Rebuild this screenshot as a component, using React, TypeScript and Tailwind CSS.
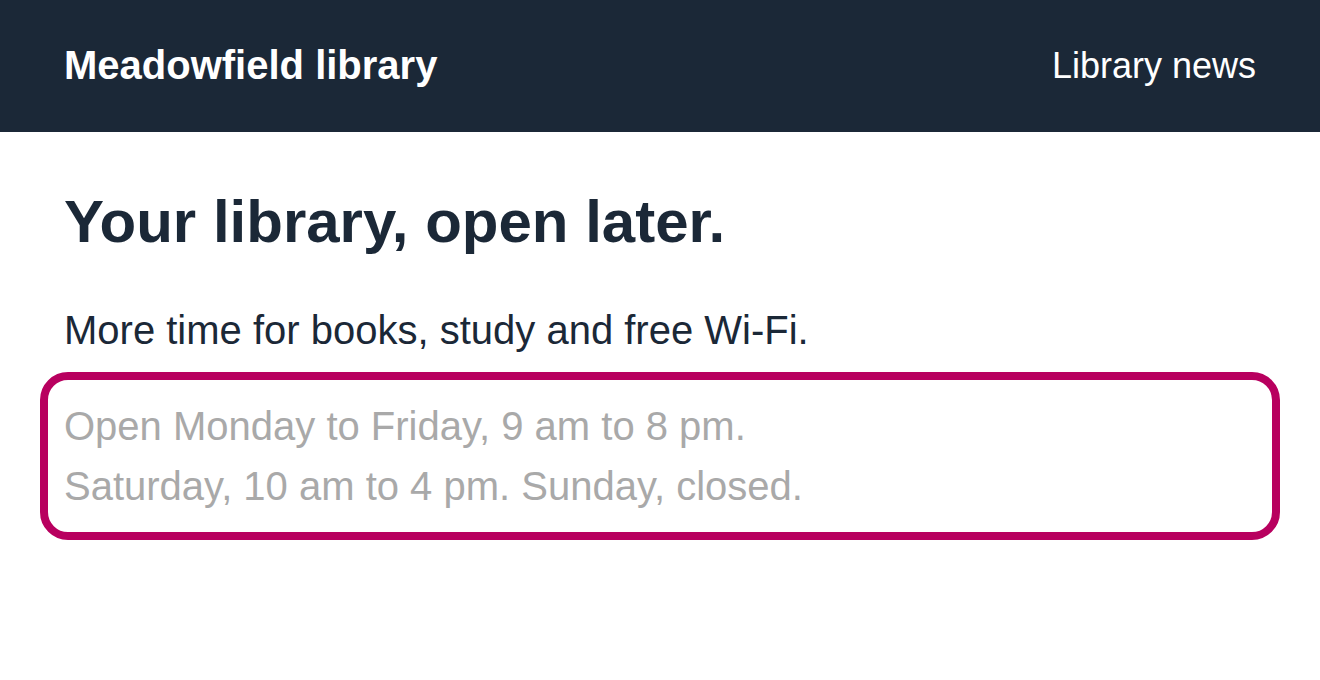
export default function App() {
  return (
    <div className="min-h-screen bg-white font-['Liberation_Sans',Arial,sans-serif] text-[#1b2837]">
      <header className="flex h-[132px] items-center justify-between bg-[#1b2837] px-16 text-white">
        <span className="mb-[2px] text-[40px] font-bold">Meadowfield library</span>
        <a href="#" className="text-[36px]">
          Library news
        </a>
      </header>

      <main className="px-16 pt-[54px]">
        <h1 className="text-[60px] font-bold leading-[1.2]">Your library, open later.</h1>
        <p className="mt-[42px] text-[40px] leading-[1.5]">
          More time for books, study and free Wi-Fi.
        </p>
        {/* hours block, highlighted with an offset outline */}
        <p className="mt-[36px] rounded-[4px] text-[40px] leading-[1.5] text-[#a9a9a9] outline-8 outline-offset-[16px] outline-[#b8005f]">
          Open Monday to Friday, 9 am to 8 pm.
          <br />
          Saturday, 10 am to 4 pm. Sunday, closed.
        </p>
      </main>
    </div>
  );
}
